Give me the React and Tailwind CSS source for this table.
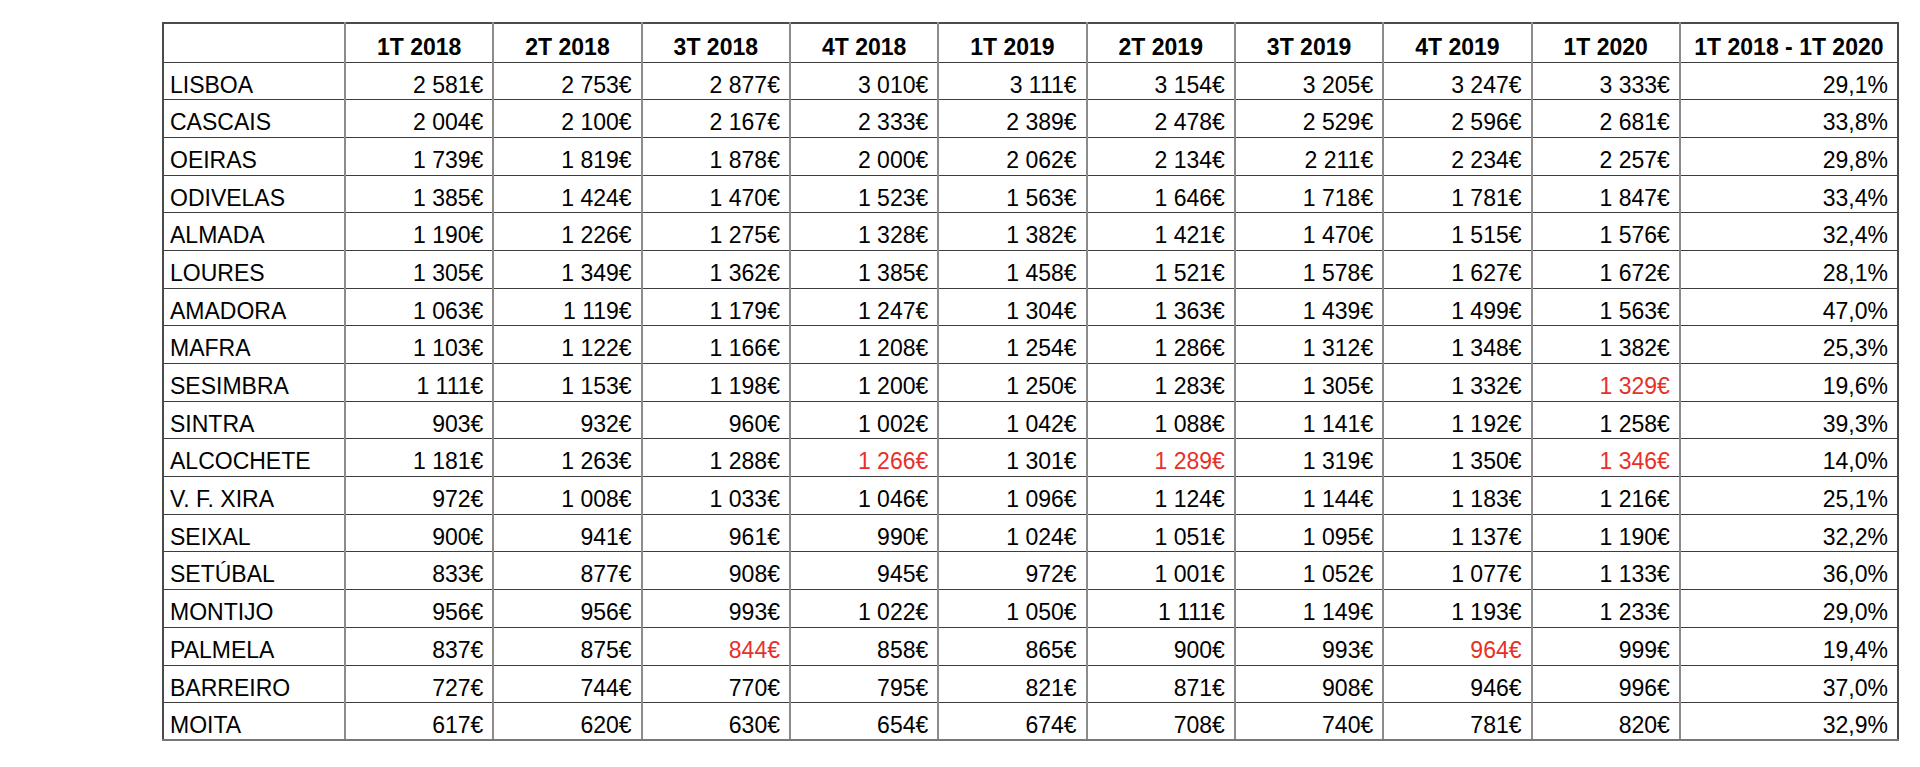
import React from "react";

const headers = ["1T 2018", "2T 2018", "3T 2018", "4T 2018", "1T 2019", "2T 2019", "3T 2019", "4T 2019", "1T 2020"];

// values marked with * are shown in red (drop vs previous quarter)
const rows = [
  ["LISBOA", "2 581", "2 753", "2 877", "3 010", "3 111", "3 154", "3 205", "3 247", "3 333", "29,1%"],
  ["CASCAIS", "2 004", "2 100", "2 167", "2 333", "2 389", "2 478", "2 529", "2 596", "2 681", "33,8%"],
  ["OEIRAS", "1 739", "1 819", "1 878", "2 000", "2 062", "2 134", "2 211", "2 234", "2 257", "29,8%"],
  ["ODIVELAS", "1 385", "1 424", "1 470", "1 523", "1 563", "1 646", "1 718", "1 781", "1 847", "33,4%"],
  ["ALMADA", "1 190", "1 226", "1 275", "1 328", "1 382", "1 421", "1 470", "1 515", "1 576", "32,4%"],
  ["LOURES", "1 305", "1 349", "1 362", "1 385", "1 458", "1 521", "1 578", "1 627", "1 672", "28,1%"],
  ["AMADORA", "1 063", "1 119", "1 179", "1 247", "1 304", "1 363", "1 439", "1 499", "1 563", "47,0%"],
  ["MAFRA", "1 103", "1 122", "1 166", "1 208", "1 254", "1 286", "1 312", "1 348", "1 382", "25,3%"],
  ["SESIMBRA", "1 111", "1 153", "1 198", "1 200", "1 250", "1 283", "1 305", "1 332", "1 329*", "19,6%"],
  ["SINTRA", "903", "932", "960", "1 002", "1 042", "1 088", "1 141", "1 192", "1 258", "39,3%"],
  ["ALCOCHETE", "1 181", "1 263", "1 288", "1 266*", "1 301", "1 289*", "1 319", "1 350", "1 346*", "14,0%"],
  ["V. F. XIRA", "972", "1 008", "1 033", "1 046", "1 096", "1 124", "1 144", "1 183", "1 216", "25,1%"],
  ["SEIXAL", "900", "941", "961", "990", "1 024", "1 051", "1 095", "1 137", "1 190", "32,2%"],
  ["SETÚBAL", "833", "877", "908", "945", "972", "1 001", "1 052", "1 077", "1 133", "36,0%"],
  ["MONTIJO", "956", "956", "993", "1 022", "1 050", "1 111", "1 149", "1 193", "1 233", "29,0%"],
  ["PALMELA", "837", "875", "844*", "858", "865", "900", "993", "964*", "999", "19,4%"],
  ["BARREIRO", "727", "744", "770", "795", "821", "871", "908", "946", "996", "37,0%"],
  ["MOITA", "617", "620", "630", "654", "674", "708", "740", "781", "820", "32,9%"],
];

const fmt = (v) => v.replace("*", "").replace(" ", "\u00a0");

export default function App() {
  return (
    <div className="min-h-screen bg-white pt-[22px] pl-[162px] font-['Liberation_Sans',Arial,sans-serif] text-[23px] text-black">
      <table className="table-fixed border-collapse border-2 border-[#4a4a4a] w-[1737px]">
        <colgroup>
          <col className="w-[182px]" />
          {headers.map((h) => (
            <col key={h} className="w-[148.3px]" />
          ))}
          <col className="w-[218px]" />
        </colgroup>
        <thead>
          <tr className="h-[39px]">
            <th className="border-y border-y-[#3d3d3d] border-x-2 border-x-[#8c8c8c] border-l-[#4a4a4a]" />
            {headers.map((h) => (
              <th
                key={h}
                className="border-y border-y-[#3d3d3d] border-x-2 border-x-[#8c8c8c] align-top pt-[10px] text-center font-bold leading-[26px]"
              >
                {h}
              </th>
            ))}
            <th className="border-y border-y-[#3d3d3d] border-x-2 border-x-[#8c8c8c] border-r-[#4a4a4a] align-top pt-[10px] text-center font-bold leading-[26px] whitespace-nowrap">
              1T 2018 - 1T 2020
            </th>
          </tr>
        </thead>
        <tbody>
          {rows.map((r, i) => (
            <tr key={r[0]} className="h-[37.7px]">
              <td
                className={`border-y border-y-[#3d3d3d] border-x-2 border-x-[#8c8c8c] border-l-[#4a4a4a] align-top pt-[9px] pl-[6px] leading-[26px] whitespace-nowrap ${
                  i === rows.length - 1 ? "border-b-2 border-b-[#777]" : ""
                }`}
              >
                {r[0]}
              </td>
              {r.slice(1, 10).map((v, j) => (
                <td
                  key={j}
                  className={`border-y border-y-[#3d3d3d] border-x-2 border-x-[#8c8c8c] align-top pt-[9px] pr-[9px] text-right leading-[26px] whitespace-nowrap ${
                    v.includes("*") ? "text-[#e8302a]" : ""
                  } ${i === rows.length - 1 ? "border-b-2 border-b-[#777]" : ""}`}
                >
                  {fmt(v)}€
                </td>
              ))}
              <td
                className={`border-y border-y-[#3d3d3d] border-x-2 border-x-[#8c8c8c] border-r-[#4a4a4a] align-top pt-[9px] pr-[9px] text-right leading-[26px] ${
                  i === rows.length - 1 ? "border-b-2 border-b-[#777]" : ""
                }`}
              >
                {r[10]}
              </td>
            </tr>
          ))}
        </tbody>
      </table>
    </div>
  );
}
